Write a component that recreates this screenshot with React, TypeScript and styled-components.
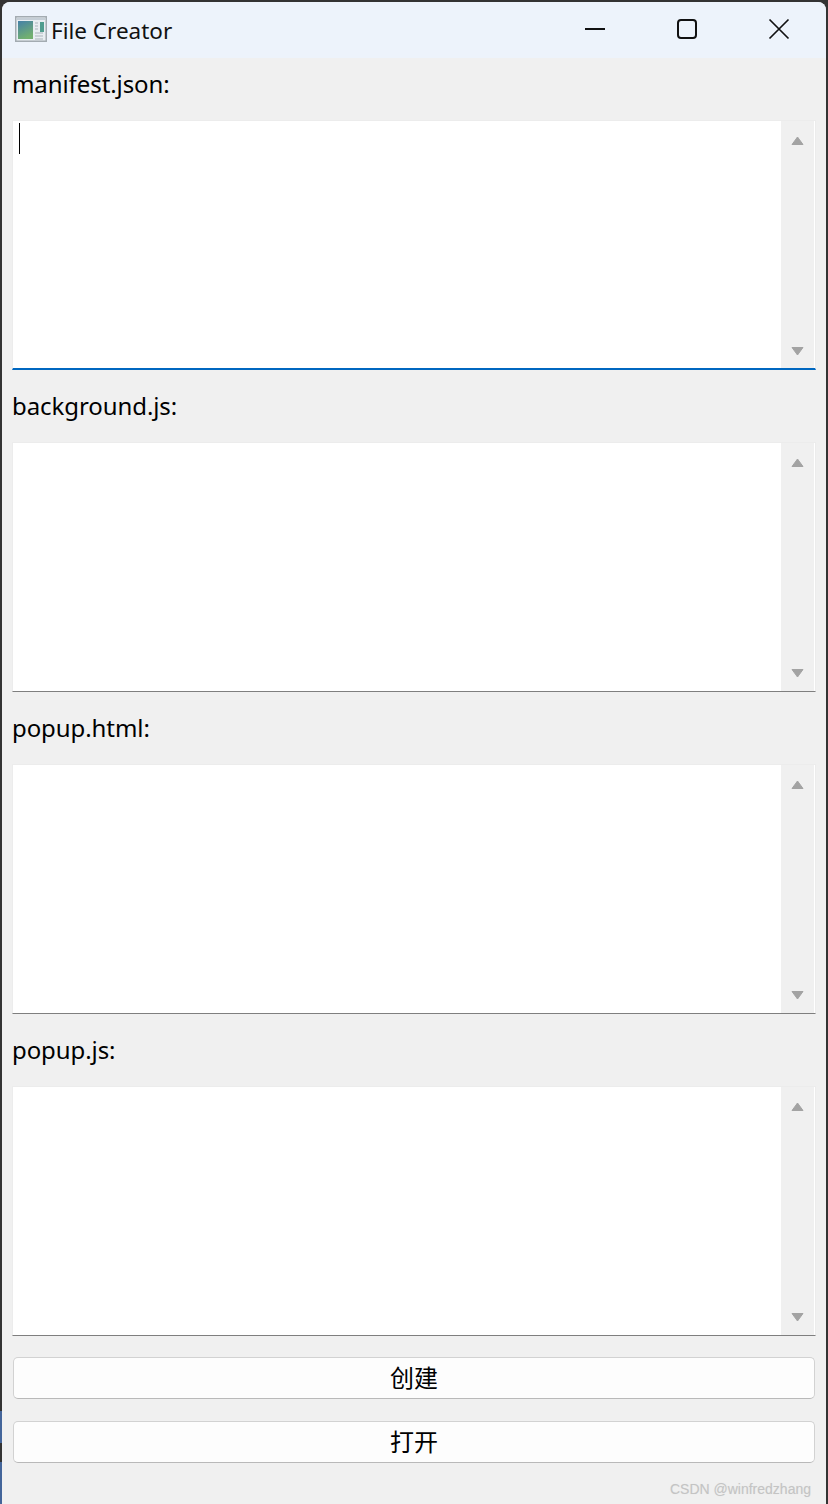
import React from "react";
import styled, { createGlobalStyle } from "styled-components";

const Global = createGlobalStyle`
  html, body { margin: 0; padding: 0; background: #333333; }
  #root { width: 828px; height: 1504px; }
`;

const Screen = styled.div`
  width: 828px;
  height: 1504px;
  box-sizing: border-box;
  padding: 2px 2px 0 2px;
  background-color: #333333;
  background-image: linear-gradient(#333333 0 1411px, #44659a 1411px 1443px, #333333 1443px 1462px, #44659a 1462px);
  background-size: 2px 100%;
  background-repeat: no-repeat;
  overflow: hidden;
`;

const Window = styled.div`
  position: relative;
  height: 100%;
  display: flex;
  flex-direction: column;
  background: #f0f0f0;
  border-radius: 8px 8px 0 0;
  overflow: hidden;
  font-family: "Noto Sans", "Noto Sans CJK SC", sans-serif;
  color: #000;
`;

const TitleBar = styled.div`
  height: 56px;
  flex: none;
  display: flex;
  align-items: center;
  padding-left: 13px;
  background: #edf3fb;
`;

const AppIcon = styled.svg`
  width: 32px;
  height: 26px;
  flex: none;
  margin-top: -2px;
`;

const TitleText = styled.span`
  margin-left: 4px;
  font-size: 22.5px;
  color: #111;
  line-height: 30px;
  margin-top: 2px;
`;

const Controls = styled.div`
  margin-left: auto;
  display: flex;
  align-self: stretch;
  padding-right: 1px;
`;

const ControlButton = styled.div`
  width: 92px;
  height: 54px;
  display: flex;
  align-items: center;
  justify-content: center;
`;

const Form = styled.div`
  flex: 1;
  display: flex;
  flex-direction: column;
  gap: 21px;
  padding: 11px 10px 0;
`;

const Label = styled.div`
  height: 30px;
  line-height: 30px;
  font-size: 24px;
  letter-spacing: -0.08px;
`;

const Editor = styled.div<{ $focused?: boolean }>`
  position: relative;
  height: 250px;
  box-sizing: border-box;
  display: flex;
  justify-content: flex-end;
  background: #fff;
  border: 1px solid #ececec;
  border-bottom: ${(p) => (p.$focused ? "2px solid #0067c0" : "1px solid #7f7f7f")};
`;

const Caret = styled.span`
  position: absolute;
  left: 6px;
  top: 2px;
  width: 1px;
  height: 31px;
  background: #000;
`;

const ScrollBar = styled.div<{ $focused?: boolean }>`
  width: 33px;
  margin-right: 1px;
  display: flex;
  flex-direction: column;
  justify-content: space-between;
  align-items: center;
  background: #f0f0f0;
  padding: 15px 0 ${(p) => (p.$focused ? 12 : 13)}px;
`;

const Arrow = styled.svg`
  width: 13px;
  height: 9px;
  display: block;
  fill: #a3a3a3;
  stroke: #a3a3a3;
`;

const Buttons = styled.div`
  display: flex;
  flex-direction: column;
  gap: 22px;
  padding: 0 1px;
`;

const Button = styled.div`
  height: 42px;
  box-sizing: border-box;
  display: flex;
  align-items: center;
  justify-content: center;
  background: #fdfdfd;
  border: 1px solid #d2d2d2;
  border-bottom-color: #b9b9b9;
  border-radius: 5px;
  font-size: 24px;
  line-height: 30px;
`;

const Watermark = styled.span`
  position: absolute;
  right: 15px;
  bottom: 6px;
  font-family: "Liberation Sans", sans-serif;
  font-size: 14px;
  line-height: 18px;
  color: #c4c4c4;
  text-shadow: 0 0 1px #e0e0e0;
`;

const ArrowUp = () => (
  <Arrow viewBox="0 0 13 9"><path d="M6.5 1 L1 8.5 H12 Z" strokeLinejoin="round" strokeWidth="1" /></Arrow>
);
const ArrowDown = () => (
  <Arrow viewBox="0 0 13 9"><path d="M1 0.5 H12 L6.5 8 Z" strokeLinejoin="round" strokeWidth="1" /></Arrow>
);

const fields = ["manifest.json:", "background.js:", "popup.html:", "popup.js:"];

export default function App() {
  return (
    <Screen>
      <Global />
      <Window>
        <TitleBar>
          <AppIcon viewBox="0 0 32 26">
            <defs>
              <linearGradient id="pane" x1="0" y1="0" x2="0.4" y2="1">
                <stop offset="0" stopColor="#4480a8" />
                <stop offset="1" stopColor="#72b070" />
              </linearGradient>
            </defs>
            <rect x="0.75" y="0.75" width="30.5" height="24.5" fill="#e8eef2" stroke="#a3abb1" strokeWidth="1.5" />
            <rect x="2" y="2" width="28" height="2" fill="#c5ced6" />
            <rect x="3" y="5" width="15" height="18" fill="url(#pane)" />
            <rect x="25" y="6" width="4" height="10" fill="#4f9d8f" />
            <path d="M20 7h3M20 10h3M20 13h3M20 17h8M20 20h8M20 23h8" stroke="#aab4bb" strokeWidth="1" />
          </AppIcon>
          <TitleText>File Creator</TitleText>
          <Controls>
            <ControlButton>
              <svg width="22" height="22" viewBox="0 0 22 22">
                <path d="M1 11h20" stroke="#111" strokeWidth="2" fill="none" />
              </svg>
            </ControlButton>
            <ControlButton>
              <svg width="22" height="22" viewBox="0 0 22 22">
                <rect x="2" y="2" width="18" height="18" rx="3" stroke="#111" strokeWidth="2" fill="none" />
              </svg>
            </ControlButton>
            <ControlButton>
              <svg width="22" height="22" viewBox="0 0 22 22">
                <path d="M1.5 1.5l19 19M20.5 1.5l-19 19" stroke="#111" strokeWidth="1.7" fill="none" />
              </svg>
            </ControlButton>
          </Controls>
        </TitleBar>
        <Form>
          {fields.map((name, i) => (
            <React.Fragment key={name}>
              <Label>{name}</Label>
              <Editor $focused={i === 0}>
                {i === 0 && <Caret />}
                <ScrollBar $focused={i === 0}>
                  <ArrowUp />
                  <ArrowDown />
                </ScrollBar>
              </Editor>
            </React.Fragment>
          ))}
          <Buttons>
            <Button>创建</Button>
            <Button>打开</Button>
          </Buttons>
        </Form>
        <Watermark>CSDN @winfredzhang</Watermark>
      </Window>
    </Screen>
  );
}
